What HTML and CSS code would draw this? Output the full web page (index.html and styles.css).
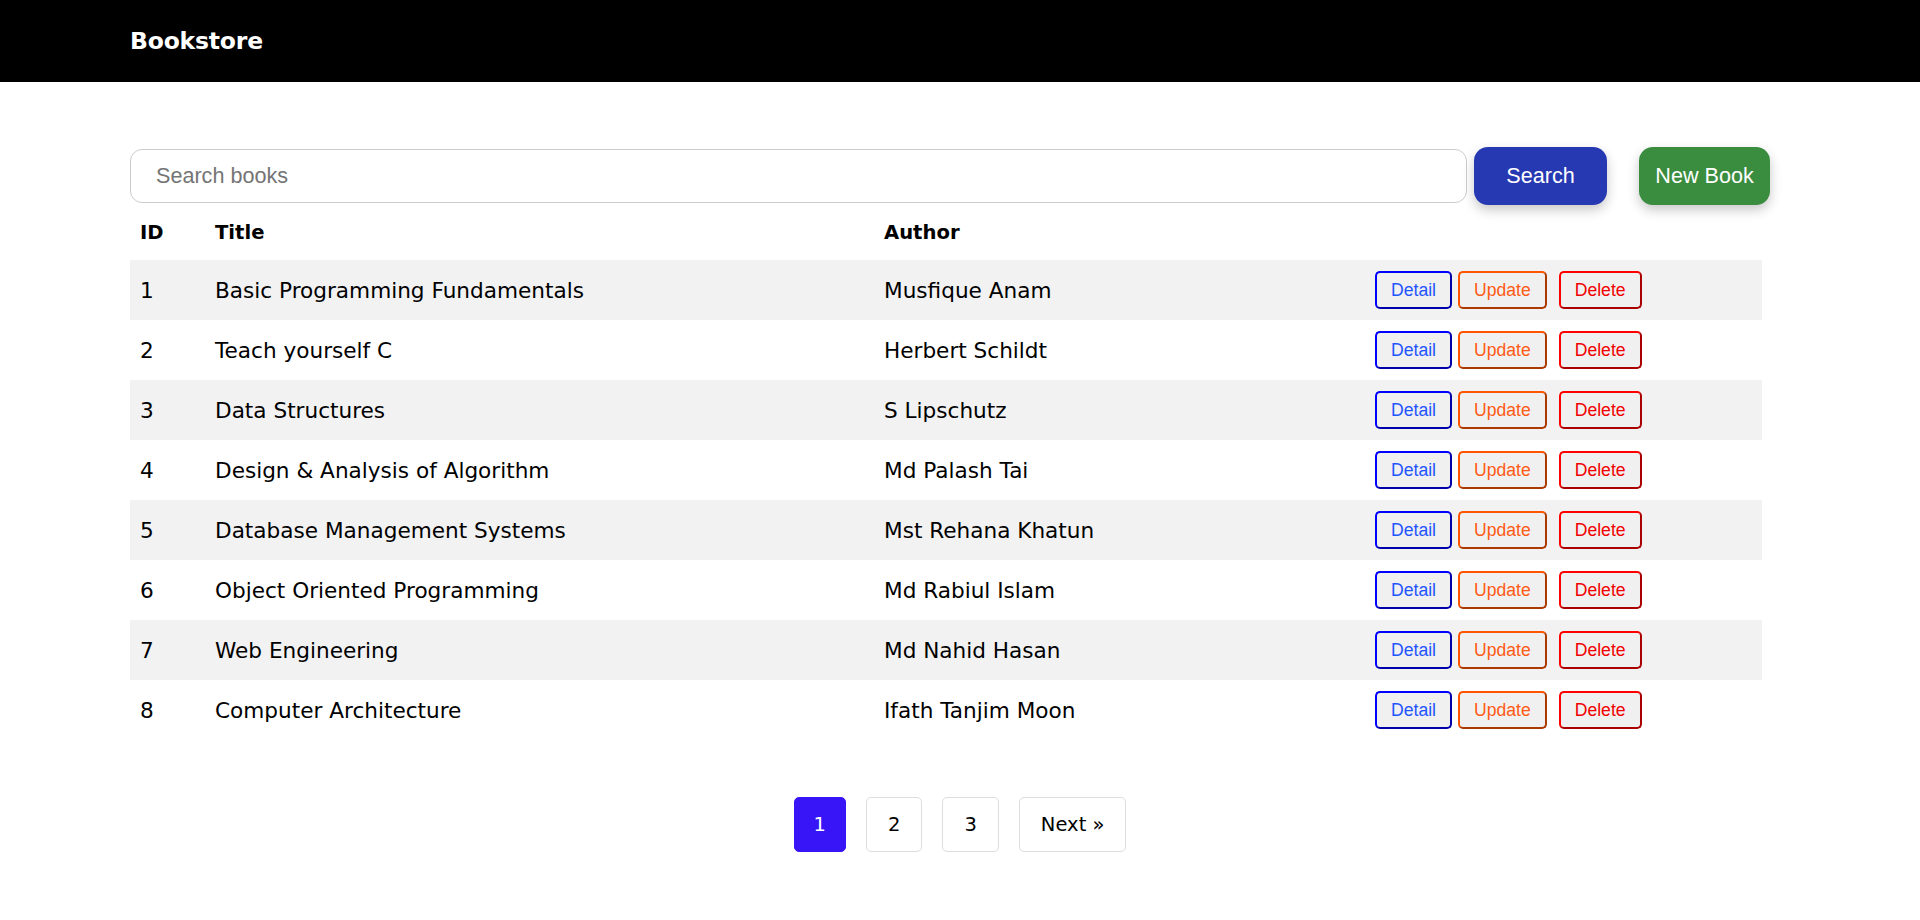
FILE: index.html
```html
<!DOCTYPE html>
<html lang="en">
<head>
<meta charset="utf-8">
<title>Bookstore</title>
<link rel="stylesheet" href="styles.css">
</head>
<body>
<header class="topbar">
  <span class="brand">Bookstore</span>
</header>
<main class="page">
  <div class="toolbar">
    <input class="search-input" type="text" placeholder="Search books">
    <button class="btn-search">Search</button>
    <button class="btn-new">New Book</button>
  </div>
  <table class="books">
    <colgroup>
      <col class="c-id"><col class="c-title"><col class="c-author"><col class="c-actions">
    </colgroup>
    <thead>
      <tr><th>ID</th><th>Title</th><th>Author</th><th></th></tr>
    </thead>
    <tbody>
      <tr><td>1</td><td>Basic Programming Fundamentals</td><td>Musfique Anam</td><td><div class="actions"><button class="act detail">Detail</button><button class="act update">Update</button><button class="act delete">Delete</button></div></td></tr>
      <tr><td>2</td><td>Teach yourself C</td><td>Herbert Schildt</td><td><div class="actions"><button class="act detail">Detail</button><button class="act update">Update</button><button class="act delete">Delete</button></div></td></tr>
      <tr><td>3</td><td>Data Structures</td><td>S Lipschutz</td><td><div class="actions"><button class="act detail">Detail</button><button class="act update">Update</button><button class="act delete">Delete</button></div></td></tr>
      <tr><td>4</td><td>Design &amp; Analysis of Algorithm</td><td>Md Palash Tai</td><td><div class="actions"><button class="act detail">Detail</button><button class="act update">Update</button><button class="act delete">Delete</button></div></td></tr>
      <tr><td>5</td><td>Database Management Systems</td><td>Mst Rehana Khatun</td><td><div class="actions"><button class="act detail">Detail</button><button class="act update">Update</button><button class="act delete">Delete</button></div></td></tr>
      <tr><td>6</td><td>Object Oriented Programming</td><td>Md Rabiul Islam</td><td><div class="actions"><button class="act detail">Detail</button><button class="act update">Update</button><button class="act delete">Delete</button></div></td></tr>
      <tr><td>7</td><td>Web Engineering</td><td>Md Nahid Hasan</td><td><div class="actions"><button class="act detail">Detail</button><button class="act update">Update</button><button class="act delete">Delete</button></div></td></tr>
      <tr><td>8</td><td>Computer Architecture</td><td>Ifath Tanjim Moon</td><td><div class="actions"><button class="act detail">Detail</button><button class="act update">Update</button><button class="act delete">Delete</button></div></td></tr>
    </tbody>
  </table>
  <nav class="pager">
    <a class="pg active">1</a>
    <a class="pg">2</a>
    <a class="pg">3</a>
    <a class="pg">Next &raquo;</a>
  </nav>
</main>
</body>
</html>
```
FILE: styles.css
```css
html, body {
  margin: 0;
  padding: 0;
  background: #fff;
}
body {
  font-family: "DejaVu Sans", "Noto Sans", sans-serif;
  color: #000;
}
.topbar {
  height: 82px;
  background: #000;
  display: flex;
  align-items: center;
  padding-left: 130px;
}
.brand {
  color: #fff;
  font-weight: 700;
  font-size: 23.5px;
  letter-spacing: -0.2px;
}
.page {
  padding: 65px 130px 40px;
}
.toolbar {
  display: flex;
  align-items: center;
  height: 58px;
}
.search-input {
  box-sizing: border-box;
  width: 1337px;
  height: 54px;
  border: 1px solid #cccccc;
  border-radius: 12px;
  padding: 0 25px;
  font-family: "Liberation Sans", Arial, sans-serif;
  font-size: 21.6px;
  color: #000;
  outline: none;
}
.search-input::placeholder {
  color: #757575;
}
.btn-search, .btn-new {
  height: 58px;
  border: none;
  border-radius: 14px;
  color: #fff;
  font-family: "Liberation Sans", Arial, sans-serif;
  font-size: 21.6px;
  box-shadow: 0 5px 12px rgba(0, 0, 0, 0.22);
  cursor: pointer;
}
.btn-search {
  width: 133px;
  margin-left: 7px;
  background: #2639b2;
}
.btn-new {
  width: 131px;
  margin-left: 32px;
  background: #3a8c3f;
}
.books {
  width: 1632px;
  border-collapse: collapse;
  table-layout: fixed;
}
.c-id { width: 75px; }
.c-title { width: 669px; }
.c-author { width: 491px; }
.c-actions { width: 397px; }
.books th {
  height: 55px;
  padding: 0 10px;
  text-align: left;
  font-weight: 700;
  font-size: 19.6px;
}
.books td {
  height: 60px;
  padding: 0 10px;
  font-size: 21.6px;
  white-space: nowrap;
}
.books tbody tr:nth-child(odd) {
  background: #f2f2f2;
}
.actions {
  display: flex;
  align-items: center;
  gap: 6px;
}
.act {
  box-sizing: border-box;
  height: 38px;
  padding: 0 14px;
  border: 2px outset;
  border-radius: 5px;
  background: #f0f0f0;
  font-family: "Liberation Sans", Arial, sans-serif;
  font-size: 17.6px;
  cursor: pointer;
}
.act.detail {
  border-color: #0000ff;
  color: #1f55ff;
}
.act.update {
  border-color: #ff5500;
  color: #ff5a14;
  margin-right: 6px;
}
.act.delete {
  border-color: #ff0000;
  color: #f00000;
}
.pager {
  margin-top: 57px;
  display: flex;
  justify-content: center;
  gap: 20px;
}
.pg {
  box-sizing: border-box;
  height: 55px;
  padding: 0 21px;
  display: flex;
  align-items: center;
  border: 1px solid #dddddd;
  border-radius: 5px;
  font-size: 19.5px;
  color: #000;
  cursor: pointer;
}
.pg.active {
  padding: 0 19px;
  background: #3715f7;
  border-color: #3715f7;
  color: #fff;
}
```
